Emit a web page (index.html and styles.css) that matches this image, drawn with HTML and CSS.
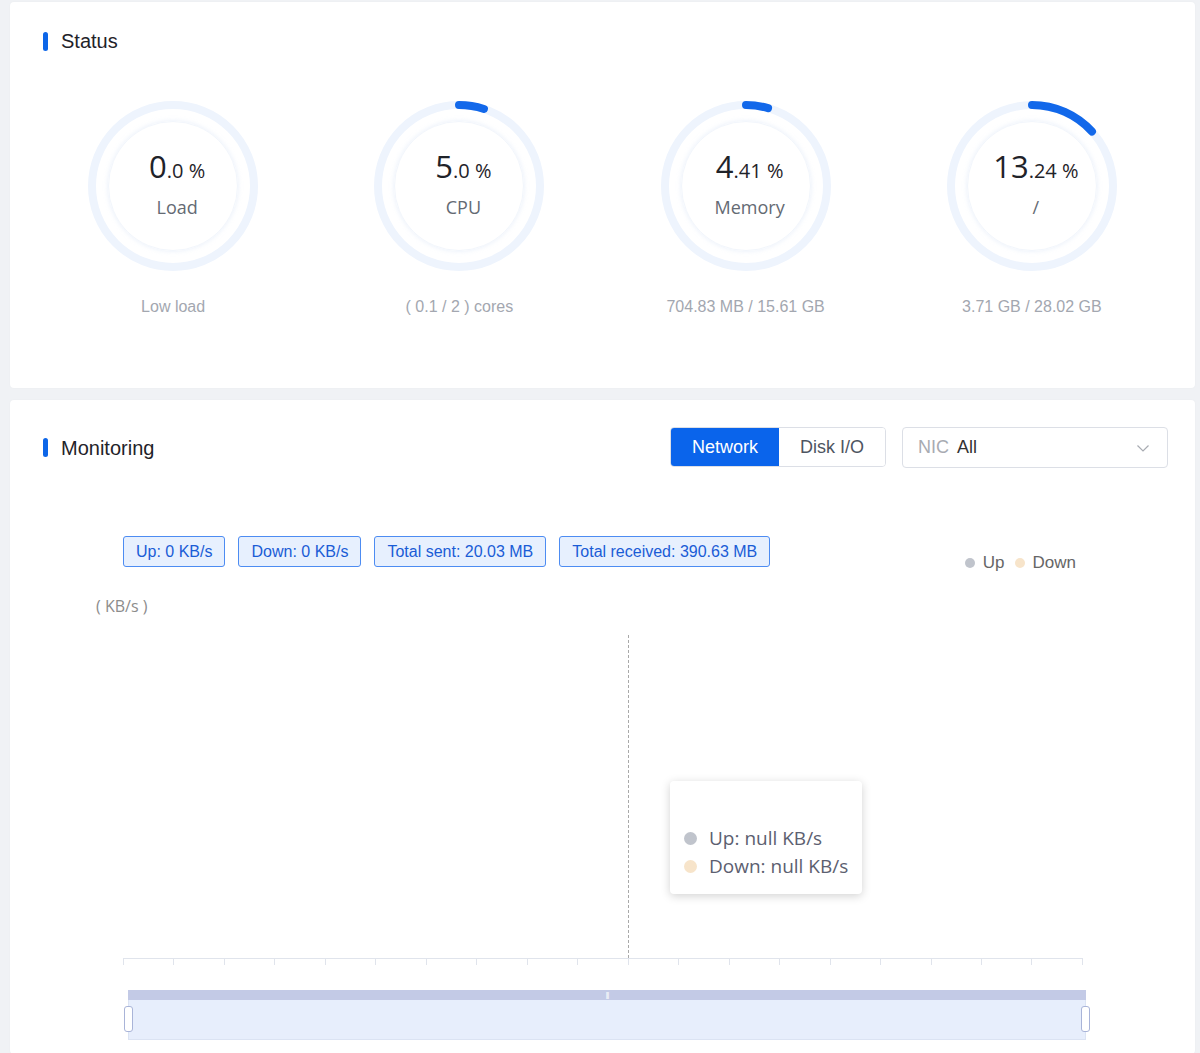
FILE: index.html
```html
<!DOCTYPE html>
<html lang="en">
<head>
<meta charset="UTF-8" />
<title>Server Status</title>
<link rel="stylesheet" href="styles.css">
</head>
<body>
<div class="page">

<section class="card status-card">
    <h2 class="card-title">Status</h2>
    <div class="gauges">
        <div class="gauge">
            <div class="ring">
                <svg viewBox="0 0 170 170" width="170" height="170">
                    <circle class="track" cx="85" cy="85" r="81" />
                </svg>
                <div class="inner">
                    <div class="value"><span class="big">0</span>.0 %</div>
                    <div class="name">Load</div>
                </div>
            </div>
            <div class="sub">Low load</div>
        </div>
        <div class="gauge">
            <div class="ring">
                <svg viewBox="0 0 170 170" width="170" height="170">
                    <circle class="track" cx="85" cy="85" r="81" />
                    <circle class="bar" cx="85" cy="85" r="81" stroke-dasharray="25.4 509" />
                </svg>
                <div class="inner">
                    <div class="value"><span class="big">5</span>.0 %</div>
                    <div class="name">CPU</div>
                </div>
            </div>
            <div class="sub">( 0.1 / 2 ) cores</div>
        </div>
        <div class="gauge">
            <div class="ring">
                <svg viewBox="0 0 170 170" width="170" height="170">
                    <circle class="track" cx="85" cy="85" r="81" />
                    <circle class="bar" cx="85" cy="85" r="81" stroke-dasharray="22.4 509" />
                </svg>
                <div class="inner">
                    <div class="value"><span class="big">4</span>.41 %</div>
                    <div class="name">Memory</div>
                </div>
            </div>
            <div class="sub">704.83 MB / 15.61 GB</div>
        </div>
        <div class="gauge">
            <div class="ring">
                <svg viewBox="0 0 170 170" width="170" height="170">
                    <circle class="track" cx="85" cy="85" r="81" />
                    <circle class="bar" cx="85" cy="85" r="81" stroke-dasharray="67.4 509" />
                </svg>
                <div class="inner">
                    <div class="value"><span class="big">13</span>.24 %</div>
                    <div class="name">/</div>
                </div>
            </div>
            <div class="sub">3.71 GB / 28.02 GB</div>
        </div>
    </div>
</section>

<section class="card monitor-card">
    <div class="monitor-head">
        <h2 class="card-title">Monitoring</h2>
        <div class="tools">
            <div class="switch">
                <button class="active">Network</button>
                <button>Disk I/O</button>
            </div>
            <div class="select">
                <span class="prefix">NIC</span>
                <span class="val">All</span>
                <svg class="chev" width="14" height="14" viewBox="0 0 14 14"><path d="M1.5 4.5 L7 10 L12.5 4.5" fill="none" stroke="#a8abb2" stroke-width="1.2"/></svg>
            </div>
        </div>
    </div>

    <div class="chart">
        <div class="chart-top">
            <span class="tag">Up: 0 KB/s</span>
            <span class="tag">Down: 0 KB/s</span>
            <span class="tag">Total sent: 20.03 MB</span>
            <span class="tag">Total received: 390.63 MB</span>
            <div class="legend">
                <span class="dot up"></span>Up
                <span class="dot down"></span>Down
            </div>
        </div>
        <div class="unit">( KB/s )</div>
        <div class="plot">
            <div class="pointer"></div>
            <div class="tooltip">
                <div class="tip-line">&nbsp;</div>
                <div class="tip-line"><span class="dot up"></span>Up: null KB/s</div>
                <div class="tip-line"><span class="dot down"></span>Down: null KB/s</div>
            </div>
        </div>
        <div class="axis">
            <span></span><span></span><span></span><span></span><span></span>
            <span></span><span></span><span></span><span></span><span></span>
            <span></span><span></span><span></span><span></span><span></span>
            <span></span><span></span><span></span><span></span>
        </div>
        <div class="zoom">
            <div class="zoom-top">|||</div>
            <div class="zoom-body"></div>
            <span class="handle left"></span>
            <span class="handle right"></span>
        </div>
    </div>
</section>

</div>
</body>
</html>
```

FILE: styles.css
```css
* {
box-sizing: border-box;
}
body {
margin: 0;
background-color: #f0f2f5;
font-family: "Liberation Sans", Arial, sans-serif;
color: #1f2329;
}
.page {
padding: 2px 5px 0 10px;
}
.card {
background-color: #fff;
border-radius: 4px;
box-shadow: 0 0 2px rgba(0, 0, 0, 0.04);
}
.card-title {
margin: 0;
font-size: 20px;
font-weight: 400;
line-height: 24px;
color: #1f2329;
display: flex;
align-items: center;
}
.card-title::before {
content: "";
width: 5px;
height: 19px;
border-radius: 3px;
background-color: #0d66e8;
margin-right: 13px;
}

/* status */
.status-card {
padding: 27px 20px 71px 33px;
}
.gauges {
display: grid;
grid-template-columns: repeat(4, 1fr);
margin: 48px 0 0 -13px;
}
.gauge {
display: flex;
flex-direction: column;
align-items: center;
}
.ring {
display: grid;
width: 170px;
height: 170px;
}
.ring svg,
.ring .inner {
grid-area: 1 / 1;
}
.ring .track {
fill: none;
stroke: #eef4fd;
stroke-width: 8;
}
.ring .bar {
fill: none;
stroke: #1268ea;
stroke-width: 8;
stroke-linecap: round;
transform: rotate(-90deg);
transform-origin: 85px 85px;
}
.ring .inner {
align-self: center;
justify-self: center;
width: 130px;
height: 130px;
border-radius: 50%;
border: 1px solid #f2f6fc;
box-shadow: 0 0 5px rgba(222, 232, 248, 0.7);
display: flex;
flex-direction: column;
align-items: center;
justify-content: center;
font-family: "Open Sans", "Noto Sans", sans-serif;
padding: 0 0 4px 8px;
}
.value {
font-size: 20px;
color: #1f2329;
line-height: 36px;
}
.value .big {
font-size: 31px;
}
.name {
font-size: 18px;
color: #646a73;
line-height: 26px;
margin-top: 5px;
}
.sub {
margin-top: 26px;
font-size: 16px;
line-height: 20px;
color: #a3a7b0;
}

/* monitoring */
.monitor-card {
margin-top: 12px;
padding: 27px 27px 14px 33px;
}
.monitor-head {
display: flex;
align-items: center;
justify-content: space-between;
}
.tools {
display: flex;
gap: 16px;
}
.switch {
display: flex;
border: 1px solid #dcdfe6;
border-radius: 4px;
overflow: hidden;
height: 40px;
}
.switch button {
font-family: inherit;
font-size: 18px;
border: 0;
background-color: #fff;
color: #4e5561;
padding: 0 21px;
cursor: pointer;
}
.switch button.active {
background-color: #0a64eb;
color: #fff;
}
.select {
width: 266px;
height: 41px;
border: 1px solid #dcdfe6;
border-radius: 4px;
display: flex;
align-items: center;
padding: 0 17px 0 15px;
font-size: 18px;
}
.select .prefix {
color: #a8abb2;
margin-right: 8px;
}
.select .val {
color: #333;
flex: 1;
}

.chart {
margin: 68px 85px 0 80px;
}
.chart-top {
display: flex;
gap: 13px;
}
.tag {
height: 31px;
line-height: 29px;
padding: 0 12px;
font-size: 16px;
color: #1a5cd6;
background-color: #e7f0fe;
border: 1px solid #4d8cf2;
border-radius: 3px;
}
.legend {
margin-left: auto;
margin-right: 7px;
padding-top: 17px;
font-size: 17px;
color: #666;
display: flex;
align-items: center;
}
.dot {
display: inline-block;
width: 10px;
height: 10px;
border-radius: 50%;
margin-right: 8px;
}
.legend .dot.down {
margin-left: 10px;
}
.dot.up {
background-color: #c0c4cc;
}
.dot.down {
background-color: #f7e4ca;
}
.unit {
margin: 23px 0 0 -27px;
font-size: 16px;
line-height: 20px;
color: #8c8c8c;
font-family: "Open Sans", "Noto Sans", sans-serif;
}
.plot {
position: relative;
height: 323px;
margin-top: 19px;
}
.pointer {
position: absolute;
left: 505px;
top: 0;
bottom: 0;
border-left: 1px dashed #a9a9a9;
}
.tooltip {
position: absolute;
left: 547px;
top: 146px;
padding: 15px 14px 14px;
white-space: nowrap;
background-color: #fff;
border-radius: 4px;
box-shadow: 0 2px 10px rgba(0, 0, 0, 0.18);
font-family: "Open Sans", "Noto Sans", sans-serif;
font-size: 19px;
color: #5c6070;
}
.tip-line {
display: flex;
align-items: center;
line-height: 28px;
}
.tooltip .dot {
width: 13px;
height: 13px;
margin-right: 12px;
}
.axis {
display: flex;
height: 7px;
border-top: 1px solid #e0e4ec;
border-right: 1px solid #e0e4ec;
}
.axis span {
flex: 1;
border-left: 1px solid #e0e4ec;
}
.zoom {
position: relative;
margin: 25px -3px 0 5px;
height: 50px;
display: flex;
flex-direction: column;
}
.zoom-top {
height: 10px;
background-color: #c3cae6;
color: #fff;
font-size: 7px;
line-height: 10px;
text-align: center;
letter-spacing: -1px;
}
.zoom-body {
flex: 1;
background-color: #e7eefc;
border: 1px solid #dbe3f3;
border-top: 0;
}
.handle {
position: absolute;
top: 16px;
width: 9px;
height: 26px;
background-color: #fff;
border: 1px solid #a9b4d8;
border-radius: 3px;
}
.handle.left {
left: -4px;
}
.handle.right {
right: -4px;
}
```
